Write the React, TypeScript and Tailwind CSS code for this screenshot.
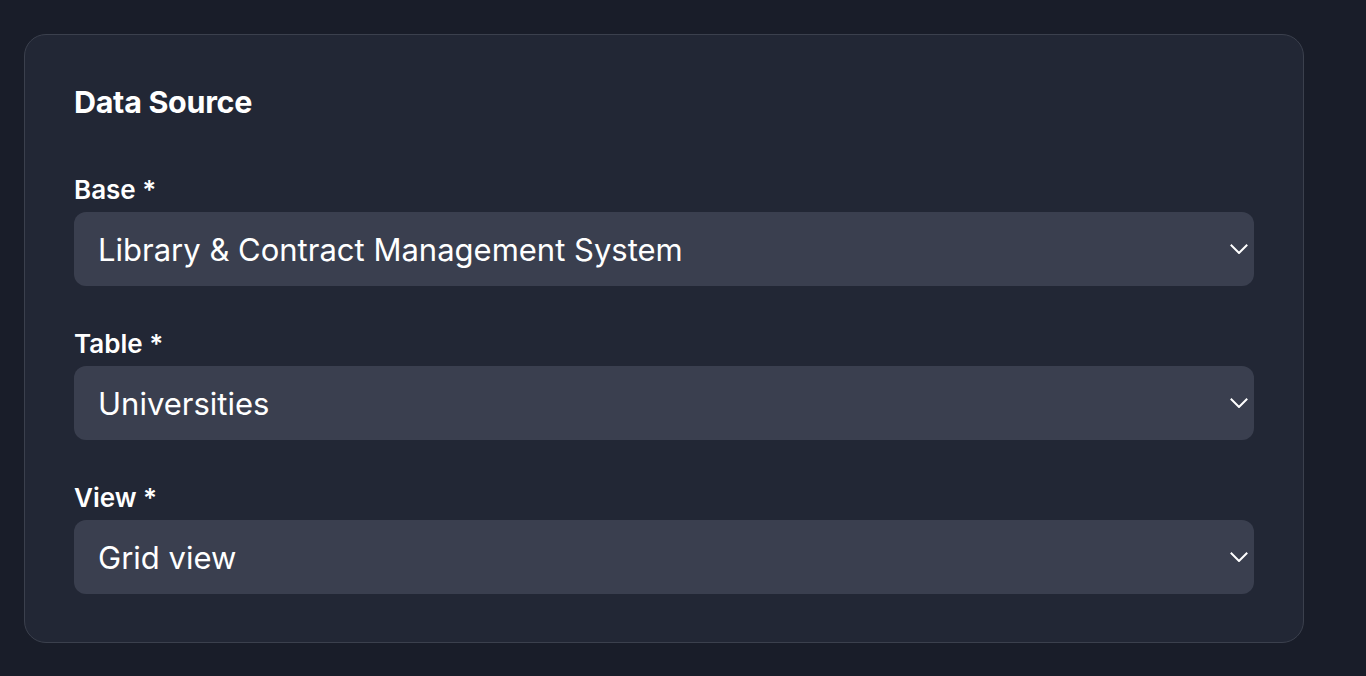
const fields = [
  { label: 'Base', value: 'Library & Contract Management System' },
  { label: 'Table', value: 'Universities' },
  { label: 'View', value: 'Grid view' },
];

function Chevron() {
  return (
    <svg width="18" height="10" viewBox="0 0 18 10" fill="none" className="text-white">
      <path d="M1.5 1.5l7.5 7.5 7.5-7.5" stroke="currentColor" strokeWidth="2" strokeLinecap="square" />
    </svg>
  );
}

export default function App() {
  return (
    <div className="min-h-screen bg-[#191d29] px-6 pt-[34px] font-['Inter',sans-serif] text-white">
      <div className="w-[1280px] rounded-[22px] border border-[#3b404d] bg-[#222735] px-[49px] pt-[49px] pb-[48px]">
        <h2 className="text-[30.5px] font-bold leading-[36px] tracking-[-0.01em]">Data Source</h2>

        <div className="mt-[55px] flex flex-col gap-[43px]">
          {fields.map((f) => (
            <div key={f.label}>
              <label className="block text-[26px] font-semibold leading-[30px] mb-[7px]">
                {f.label} *
              </label>
              <div className="flex h-[74px] items-center justify-between rounded-[12px] bg-[#3a3f4f] pl-6 pr-[6px]">
                <span className="text-[31px] leading-none">{f.value}</span>
                <Chevron />
              </div>
            </div>
          ))}
        </div>
      </div>
    </div>
  );
}
